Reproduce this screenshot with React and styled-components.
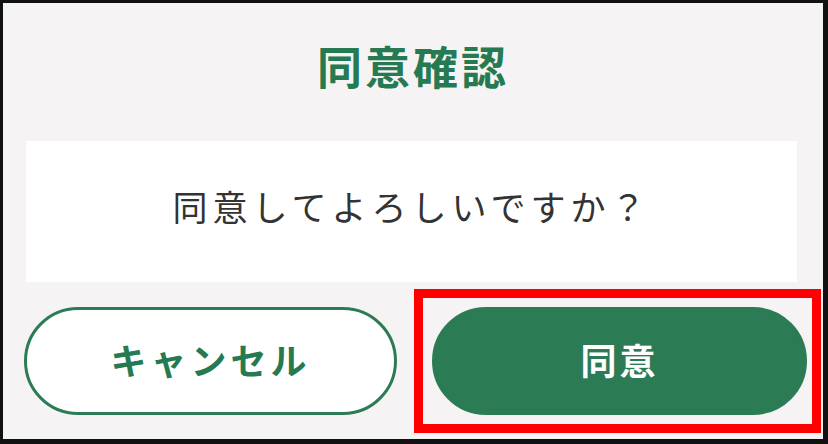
import React from 'react';
import styled, { createGlobalStyle } from 'styled-components';

const GlobalStyle = createGlobalStyle`
    html, body {
        margin: 0;
        padding: 0;
        background: #ffffff;
    }
    body {
        font-family: "Noto Sans CJK JP", "Noto Sans", sans-serif;
    }
`

const Frame = styled.div`
    width: 828px;
    height: 444px;
    box-sizing: border-box;
    border-style: solid;
    border-color: #111111;
    border-width: 3px 5px 5px 3px;
    background: #f5f3f3;
    display: flex;
    flex-direction: column;
`

const Title = styled.h2`
    margin: 33px 0 45px 0;
    height: 60px;
    line-height: 60px;
    font-size: 45px;
    font-weight: 700;
    letter-spacing: 3px;
    text-align: center;
    color: #267a52;
`

const MessageBox = styled.div`
    margin: 0 26px 0 23px;
    height: 141px;
    background: #ffffff;
    display: flex;
    align-items: center;
    justify-content: center;
    padding-bottom: 12px;
    box-sizing: border-box;
`

const Message = styled.p`
    margin: 0;
    font-size: 35px;
    letter-spacing: 5px;
    color: #333333;
`

const ButtonRow = styled.div`
    margin: 7px 0 0 21px;
    display: flex;
    align-items: center;
    gap: 17px;
`

const Highlight = styled.div`
    border: 9px solid #ff0000;
    padding: 9px 5px 9px 9px;
    display: flex;
`

const Button = styled.button`
    width: ${props => props.primary ? '375px' : '373px'};
    height: 108px;
    box-sizing: border-box;
    border-radius: 60px;
    border: 3px solid #2b7b55;
    background: ${props => props.primary ? '#2b7b55' : '#ffffff'};
    color: ${props => props.primary ? '#ffffff' : '#267a52'};
    font-family: "Noto Sans CJK JP", "Noto Sans", sans-serif;
    font-size: 36px;
    font-weight: 700;
    letter-spacing: ${props => props.primary ? '3px' : '4px'};
    padding: 0 0 4px 0;
    cursor: pointer;
`

export default function App() {
    return (
        <>
            <GlobalStyle />
            <Frame>
                <Title>同意確認</Title>
                <MessageBox>
                    <Message>同意してよろしいですか？</Message>
                </MessageBox>
                <ButtonRow>
                    <Button>キャンセル</Button>
                    <Highlight>
                        <Button primary>同意</Button>
                    </Highlight>
                </ButtonRow>
            </Frame>
        </>
    );
}
